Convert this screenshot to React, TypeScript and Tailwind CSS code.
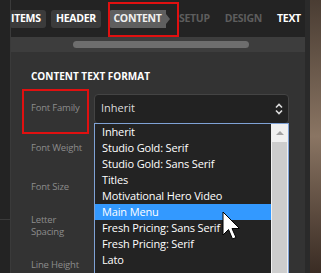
import React from "react";

const fonts = [
  "Inherit",
  "Studio Gold: Serif",
  "Studio Gold: Sans Serif",
  "Titles",
  "Motivational Hero Video",
  "Main Menu",
  "Fresh Pricing: Sans Serif",
  "Fresh Pricing: Serif",
  "Lato",
];

export default function App() {
  return (
    <div className="relative flex w-[321px] h-[273px] overflow-hidden bg-[#222] font-['Open_Sans',sans-serif]">
      {/* left strip */}
      <div className="w-[11px] shrink-0 bg-[#232323] border-r border-[#3a3a3a] flex flex-col">
        <div className="h-[220px] shrink-0 border-b border-[#3a3a3a]" />
      </div>

      {/* main panel */}
      <div className="w-[294px] shrink-0 flex flex-col overflow-hidden">
        <div className="h-[37px] shrink-0 bg-[#232323] flex items-center overflow-hidden text-[10.5px] font-bold tracking-[-0.3px] whitespace-nowrap">
          <div className="-ml-[1px] h-[18px] w-[36px] pl-[1px] rounded-[3px] bg-[#3b3b3b] text-white flex items-center">
            ITEMS
          </div>
          <div className="ml-[5px] h-[18px] w-[50px] rounded-[3px] bg-[#3b3b3b] text-white flex items-center justify-center">
            HEADER
          </div>
          <div className="ml-[8px] flex items-center">
            <div className="h-[18px] w-[57px] rounded-l-[3px] bg-[#5f5f5f] text-[#f0f0f0] flex items-center justify-center">
              CONTENT
            </div>
            <div className="w-0 h-0 border-y-[5px] border-y-transparent border-l-[4px] border-l-[#5f5f5f]" />
          </div>
          <div className="ml-[9px] text-[#5d5d5d]">SETUP</div>
          <div className="ml-[15px] text-[#5d5d5d]">DESIGN</div>
          <div className="ml-[15px] text-white">TEXT</div>
        </div>
        <div className="h-[15px] shrink-0 bg-[#3d3d3d] flex items-center pl-[62px]">
          <div className="w-[176px] h-[7px] rounded-full bg-[#6e6e6e]" />
        </div>
        <div className="flex-1 bg-[#333] pl-[20px]">
          <div className="pt-[18px] h-[37px] text-[10px] leading-[12px] font-bold text-white">
            CONTENT TEXT FORMAT
          </div>
          <div className="h-[39px] flex items-center">
            <div className="w-[63px] text-[9.5px] tracking-[-0.2px] whitespace-nowrap text-[#8c8c8c]">Font Family</div>
            <div className="w-[195px] h-[30px] rounded-[4px] bg-[#222] border border-[#444] flex items-center justify-between pl-[6px] pr-[5px]">
              <span className="text-[11px] text-[#dcdcdc]">Inherit</span>
              <svg width="8" height="12" viewBox="0 0 8 12">
                <path d="M1 4.5 L4 1.5 L7 4.5" fill="none" stroke="#ddd" strokeWidth="1.6" />
                <path d="M1 7.5 L4 10.5 L7 7.5" fill="none" stroke="#ddd" strokeWidth="1.6" />
              </svg>
            </div>
          </div>
          <div className="text-[9.5px] tracking-[-0.2px] leading-[12px] text-[#8c8c8c] whitespace-nowrap">
            <div className="h-[39px] flex items-center">Font Weight</div>
            <div className="h-[39px] flex items-center">Font Size</div>
            <div className="h-[39px] flex items-center">
              Letter
              <br />
              Spacing
            </div>
            <div className="h-[39px] flex items-center">Line Height</div>
          </div>
        </div>
      </div>

      {/* right border of panel */}
      <div className="w-[5px] shrink-0 bg-[#2a2a2a]" />

      {/* photo edge */}
      <div className="flex-1 bg-linear-to-b from-[#4a3d33] via-[#8a7563] to-[#3a2c24]" />

      {/* dropdown list */}
      <div className="absolute left-[94px] top-[123px] w-[195px] h-[160px] bg-[#232323] border border-[#7fa2d6] flex">
        <div className="flex-1">
          {fonts.map((f) => (
            <div
              key={f}
              className={
                "h-[16px] pl-[7px] flex items-center text-[11px] tracking-[-0.15px] text-white whitespace-nowrap " +
                (f === "Main Menu" ? "bg-[#3399ff]" : "")
              }
            >
              {f}
            </div>
          ))}
        </div>
        <div className="w-[17px] bg-[#f0f0f0] flex flex-col">
          <div className="h-[18px] flex items-center justify-center">
            <div className="w-0 h-0 border-x-[4px] border-x-transparent border-b-[4px] border-b-[#a3a3a3]" />
          </div>
          <div className="flex-1 mx-[1px] bg-[#cdcdcd]" />
        </div>
      </div>

      {/* annotations */}
      <div className="absolute left-[108px] top-[2px] w-[71px] h-[35px] border-2 border-[#e01010]" />
      <div className="absolute left-[22px] top-[89px] w-[67px] h-[45px] border-2 border-[#e01010]" />

      {/* cursor */}
      <svg className="absolute left-[222px] top-[211px]" width="20" height="31" viewBox="0 0 20 31">
        <path d="M1 1 L1 24 L6.5 18.5 L10.5 28 L14 26.5 L10 17.5 L17.5 17.5 Z" fill="#fff" stroke="#000" strokeWidth="1" />
      </svg>
    </div>
  );
}
